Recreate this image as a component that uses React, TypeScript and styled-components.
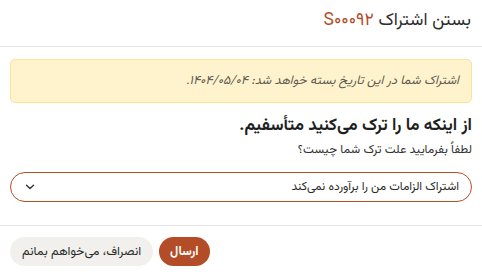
import React from "react";
import styled, { createGlobalStyle } from "styled-components";

const Global = createGlobalStyle`
  html, body { margin: 0; padding: 0; background: #fff; }
  body { font-family: "Vazirmatn", "Noto Sans Arabic", "DejaVu Sans Condensed", "DejaVu Sans", sans-serif; color: #2b2b2b; }
  * { box-sizing: border-box; }
`;

const Modal = styled.div`
  direction: rtl;
  width: 482px;
  height: 277px;
  display: flex;
  flex-direction: column;
  background: #fff;
`;

const Header = styled.div`
  height: 47px;
  display: flex;
  align-items: center;
  padding: 0 11px 6px;
  border-bottom: 1px solid #e3e3e3;
`;

const Title = styled.h2`
  margin: 0;
  font-size: 17.5px;
  font-weight: 400;
  color: #2e2e2e;
`;

const Code = styled.span`
  color: #b24d27;
`;

const Body = styled.div`
  padding: 12px 10px 0;
  display: flex;
  flex-direction: column;
  height: 179px;
  border-bottom: 1px solid #e3e3e3;
`;

const Alert = styled.div`
  height: 44px;
  display: flex;
  align-items: center;
  padding: 0 12px;
  background: #fef3cc;
  border: 1px solid #fce19a;
  border-radius: 5px;
  font-size: 12.5px;
  font-style: italic;
  color: #5f5a52;
`;

const Heading = styled.h3`
  margin: 11px 0 0;
  font-size: 17px;
  font-weight: 700;
  color: #1f1f1f;
  line-height: 24px;
`;

const Sub = styled.p`
  margin: 2px 0 0;
  font-size: 12.2px;
  color: #333;
  line-height: 20px;
`;

const Select = styled.div`
  margin-top: 12px;
  height: 30px;
  border: 1px solid #b24d27;
  border-radius: 15px;
  display: flex;
  align-items: center;
  justify-content: space-between;
  padding: 0 12px 0 14px;
  font-size: 12px;
  color: #2b2b2b;
`;

const Footer = styled.div`
  display: flex;
  justify-content: flex-end;
  gap: 6px;
  padding: 11px 10px 0;
`;

const Button = styled.button<{ $primary?: boolean }>`
  height: 29px;
  border: none;
  border-radius: 15px;
  padding: 0 ${(p) => (p.$primary ? "11px" : "12px")};
  font-family: inherit;
  font-size: 12.5px;
  font-weight: ${(p) => (p.$primary ? 700 : 400)};
  background: ${(p) => (p.$primary ? "#b24d27" : "#f1f0ed")};
  color: ${(p) => (p.$primary ? "#fff" : "#2b2b2b")};
`;

export default function App() {
  return (
    <>
      <Global />
      <Modal>
        <Header>
          <Title>
            بستن اشتراک <Code>S۰۰۰۹۲</Code>
          </Title>
        </Header>
        <Body>
          <Alert>اشتراک شما در این تاریخ بسته خواهد شد: ۱۴۰۴/۰۵/۰۴.</Alert>
          <Heading>از اینکه ما را ترک می‌کنید متأسفیم.</Heading>
          <Sub>لطفاً بفرمایید علت ترک شما چیست؟</Sub>
          <Select>
            <span>اشتراک الزامات من را برآورده نمی‌کند</span>
            <svg width="10" height="6" viewBox="0 0 10 6" fill="none">
              <path d="M1.5 1.2 L5 4.5 L8.5 1.2" stroke="#333" strokeWidth="1.4" strokeLinecap="round" strokeLinejoin="round" />
            </svg>
          </Select>
        </Body>
        <Footer>
          <Button $primary>ارسال</Button>
          <Button>انصراف، می‌خواهم بمانم</Button>
        </Footer>
      </Modal>
    </>
  );
}
